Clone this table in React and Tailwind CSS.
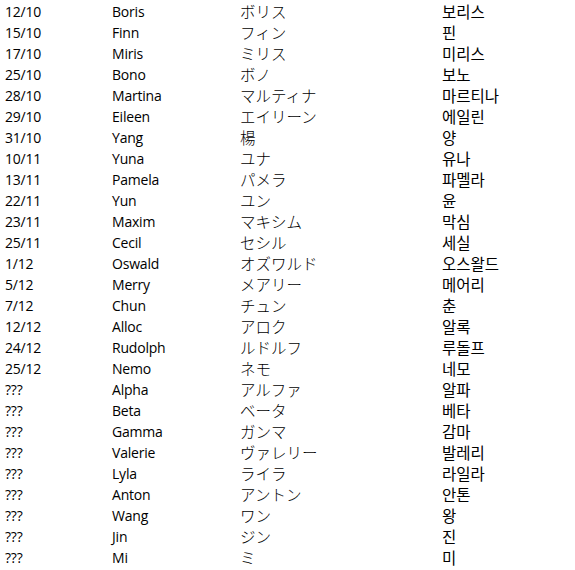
import React from "react";

const rows = [
  ["12/10", "Boris", "ボリス", "보리스"],
  ["15/10", "Finn", "フィン", "핀"],
  ["17/10", "Miris", "ミリス", "미리스"],
  ["25/10", "Bono", "ボノ", "보노"],
  ["28/10", "Martina", "マルティナ", "마르티나"],
  ["29/10", "Eileen", "エイリーン", "에일린"],
  ["31/10", "Yang", "楊", "양"],
  ["10/11", "Yuna", "ユナ", "유나"],
  ["13/11", "Pamela", "パメラ", "파멜라"],
  ["22/11", "Yun", "ユン", "윤"],
  ["23/11", "Maxim", "マキシム", "막심"],
  ["25/11", "Cecil", "セシル", "세실"],
  ["1/12", "Oswald", "オズワルド", "오스왈드"],
  ["5/12", "Merry", "メアリー", "메어리"],
  ["7/12", "Chun", "チュン", "춘"],
  ["12/12", "Alloc", "アロク", "알록"],
  ["24/12", "Rudolph", "ルドルフ", "루돌프"],
  ["25/12", "Nemo", "ネモ", "네모"],
  ["???", "Alpha", "アルファ", "알파"],
  ["???", "Beta", "ベータ", "베타"],
  ["???", "Gamma", "ガンマ", "감마"],
  ["???", "Valerie", "ヴァレリー", "발레리"],
  ["???", "Lyla", "ライラ", "라일라"],
  ["???", "Anton", "アントン", "안톤"],
  ["???", "Wang", "ワン", "왕"],
  ["???", "Jin", "ジン", "진"],
  ["???", "Mi", "ミ", "미"],
];

export default function App() {
  return (
    <div className="w-[575px] h-[570px] bg-white text-black pt-[1px] overflow-hidden">
      {rows.map((r, i) => (
        <div key={i} className="flex items-center h-[21px] pl-[5px]">
          <div className="w-[107px] text-[14px] font-['Open_Sans',sans-serif] tracking-[-0.2px]">{r[0]}</div>
          <div className="w-[128px] text-[14px] font-['Open_Sans',sans-serif] tracking-[-0.2px]">{r[1]}</div>
          <div className="w-[202px] text-[15.5px] font-light font-['Noto_Sans_CJK_JP',sans-serif]">{r[2]}</div>
          <div className="text-[15.5px] font-['Noto_Sans_CJK_KR',sans-serif]">{r[3]}</div>
        </div>
      ))}
    </div>
  );
}
